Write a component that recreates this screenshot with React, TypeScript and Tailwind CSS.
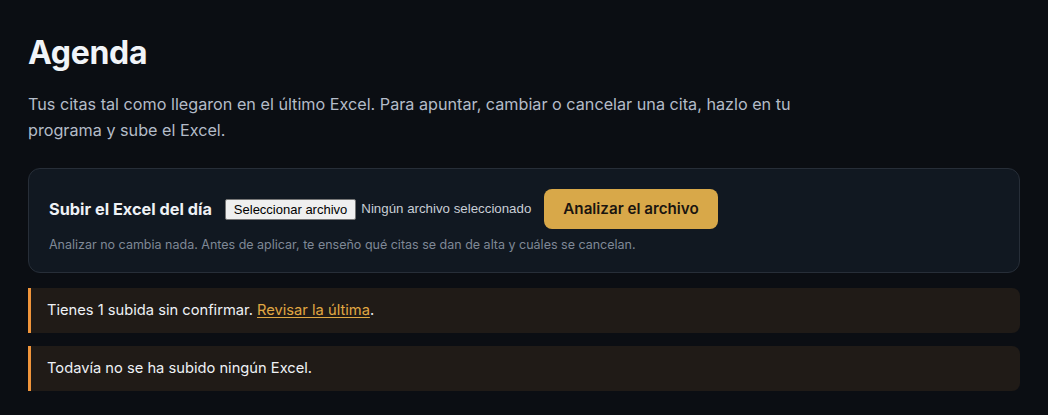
export default function App() {
  return (
    <div
      className="min-h-[415px] bg-[#0b0e13] px-7 pt-[33px] pb-6 text-[#e8ecf2]"
      style={{ fontFamily: "Inter, 'Noto Sans', sans-serif" }}
    >
      <h1 className="text-[32px] font-bold leading-[40px] tracking-[-0.01em] text-[#f1f4f8]">Agenda</h1>

      <p className="mt-[18px] max-w-[800px] text-[16.2px] leading-[26px] text-[#b4bcc8]">
        Tus citas tal como llegaron en el último Excel. Para apuntar, cambiar o cancelar una cita, hazlo en tu
        programa y sube el Excel.
      </p>

      {/* Subida */}
      <div className="mt-[25px] rounded-xl border border-[#272e38] bg-[#111821] px-5 pt-5 pb-[17px]">
        <div className="flex items-center">
          <span className="text-[16.3px] font-bold text-[#eef1f5]">Subir el Excel del día</span>
          <button
            className="ml-[13px] h-[21px] rounded-[2px] border border-[#767676] bg-[#efefef] px-[8px] text-[13px] leading-[19px] text-black"
            style={{ fontFamily: "'Liberation Sans', Arial, sans-serif" }}
          >
            Seleccionar archivo
          </button>
          <span
            className="ml-[5px] text-[13.3px] text-[#c9ced6]"
            style={{ fontFamily: "'Liberation Sans', Arial, sans-serif" }}
          >
            Ningún archivo seleccionado
          </span>
          <button className="ml-[13px] h-[40px] rounded-lg bg-[#d8a849] px-[19px] text-[15.2px] font-semibold text-[#1a1510]">
            Analizar el archivo
          </button>
        </div>
        <p className="mt-[7px] text-[12.5px] text-[#7f8896]">
          Analizar no cambia nada. Antes de aplicar, te enseño qué citas se dan de alta y cuáles se cancelan.
        </p>
      </div>

      {/* Avisos */}
      <div className="mt-[15px] flex flex-col gap-[13px]">
        <div className="flex h-[45px] items-center rounded-r-lg border-l-[3px] border-[#f0953b] bg-[#201b17] pl-4 text-[14.7px] text-[#eef1f5]">
          <span>
            Tienes 1 subida sin confirmar.{" "}
            <a href="#" className="text-[#e0a843] underline underline-offset-2">
              Revisar la última
            </a>
            .
          </span>
        </div>
        <div className="flex h-[45px] items-center rounded-r-lg border-l-[3px] border-[#f0953b] bg-[#201b17] pl-4 text-[14.7px] text-[#eef1f5]">
          Todavía no se ha subido ningún Excel.
        </div>
      </div>
    </div>
  );
}
